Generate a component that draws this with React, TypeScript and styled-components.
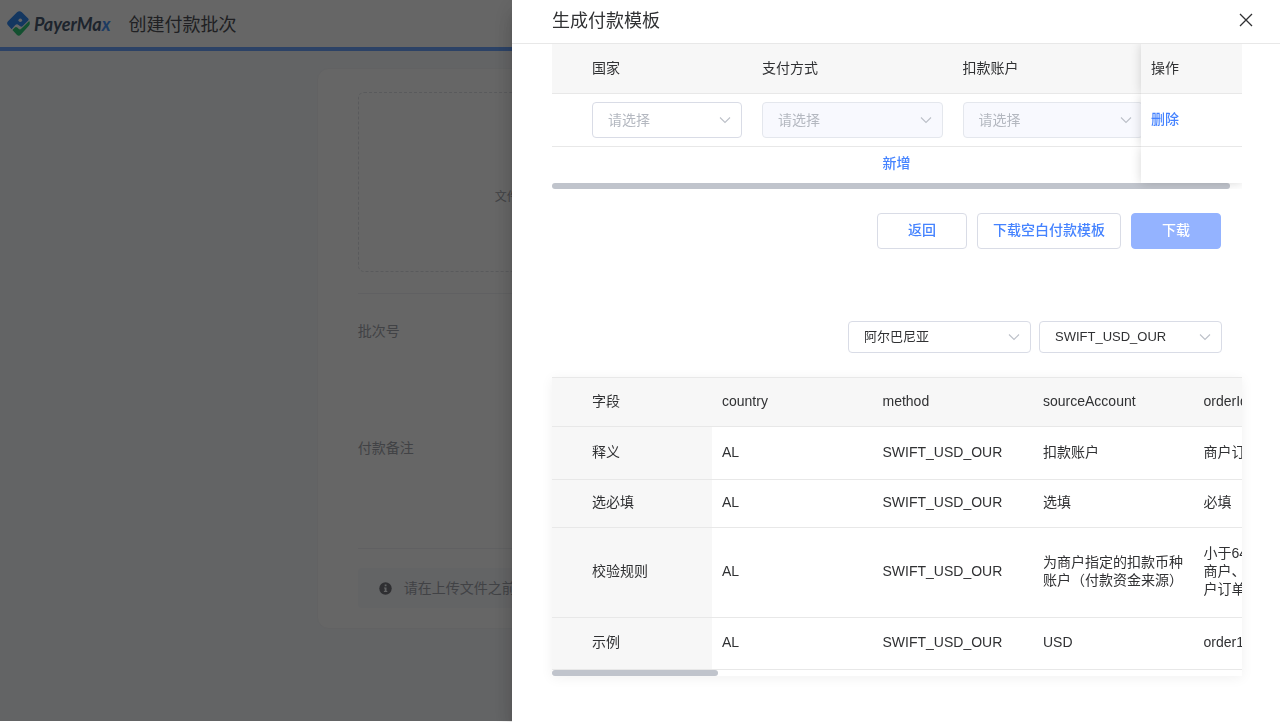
import React from "react";
import styled, { createGlobalStyle } from "styled-components";

const GlobalStyle = createGlobalStyle`
  *, *::before, *::after { box-sizing: border-box; }
  body {
    margin: 0;
    background: #fff;
    color: #303133;
    font-family: "Liberation Sans", "Noto Sans CJK SC", sans-serif;
    font-size: 14px;
    line-height: 18px;
  }
  button, select { font-family: inherit; }
`;

/* ---------- page behind the drawer ---------- */

const Page = styled.div`
  min-height: calc(100vh - 1px);
  background: #f8f9fd;
`;

const TopBar = styled.header`
  display: flex;
  align-items: center;
  gap: 18px;
  height: 51px;
  padding: 0 7px;
  background: #fff;
  border-bottom: 4px solid #6ea6ff;
`;

const Brand = styled.a`
  display: flex;
  align-items: center;
  gap: 4px;
  color: #4a5a70;
  font: italic 700 18px/24px "Lato", sans-serif;
  text-decoration: none;

  em { color: #4a95f5; }
`;

const PageTitle = styled.h1`
  margin: 0;
  padding-top: 2px;
  color: #505258;
  font-size: 18px;
  font-weight: 400;
  line-height: 24px;
`;

const Card = styled.main`
  width: 50.5%;
  margin: 17px auto 0;
  padding: 23px 40px 20px;
  background: #fff;
  border: 1px solid #f5f6f8;
  border-radius: 12px;
`;

const DropZone = styled.div`
  display: flex;
  align-items: center;
  height: 180px;
  padding: 30px 136px 0;
  border: 1px dashed #dfe1e6;
  border-radius: 6px;
  color: #a3a6ad;
  font-size: 12px;
`;

const Fields = styled.section`
  display: flex;
  flex-direction: column;
  gap: 99px;
  height: 256px;
  margin: 21px 0 19px;
  padding: 28px 0;
  border-top: 1px solid #f0f1f5;
  border-bottom: 1px solid #f0f1f5;
  color: #a3a6ad;
`;

const Notice = styled.p`
  display: flex;
  align-items: center;
  gap: 12px;
  height: 40px;
  margin: 0;
  padding: 0 21px;
  background: #f8f9fd;
  border-radius: 4px;
  color: #a3a6ad;
  white-space: nowrap;
`;

/* ---------- drawer ---------- */

const Mask = styled.div`
  position: fixed;
  inset: 0 0 1px;
  background: rgba(0, 0, 0, 0.6);
`;

const Drawer = styled.aside`
  position: fixed;
  inset: 0 0 0 auto;
  display: flex;
  flex-direction: column;
  width: 60%;
  background: #fff;
  box-shadow: 0 8px 10px -5px rgba(0, 0, 0, 0.2), 0 16px 20px rgba(0, 0, 0, 0.12),
    0 6px 24px 2px rgba(0, 0, 0, 0.1);
`;

const DrawerHeader = styled.div`
  display: flex;
  align-items: center;
  justify-content: space-between;
  height: 44px;
  padding: 0 25px 3px 40px;
  border-bottom: 1px solid #e8e8e8;

  h2 {
    margin: 0;
    padding-top: 2px;
    font-size: 18px;
    font-weight: 400;
    line-height: 24px;
  }
`;

const CloseButton = styled.button`
  display: flex;
  padding: 2px;
  border: 0;
  background: none;
  color: #303133;
  cursor: pointer;
`;

const DrawerBody = styled.div`
  flex: 1;
  min-height: 0;
  padding: 0 38px 0 40px;
  overflow: hidden;
`;

const Scroller = styled.div<{ $raised?: boolean }>`
  overflow-x: auto;
  overflow-y: hidden;
  scrollbar-width: none;
  box-shadow: ${(p) => (p.$raised ? "0 2px 12px rgba(0, 0, 0, 0.06)" : "none")};
`;

const ScrollThumb = styled.div<{ $share: number }>`
  position: sticky;
  left: 0;
  width: ${(p) => p.$share}%;
  height: 6px;
  border-radius: 3px;
  background: #c0c4cc;
`;

const BaseTable = styled.table`
  table-layout: fixed;
  border-collapse: separate;
  border-spacing: 0;

  th, td {
    padding: 0 10px;
    border-bottom: 1px solid #e8e8e8;
    font-weight: 400;
    text-align: left;
  }
  th:first-child { padding-left: 40px; }
  thead th {
    height: 50px;
    padding-bottom: 2px;
    background: #f7f7f7;
  }
`;

const TemplateTable = styled(BaseTable)`
  width: calc(100% + 12px);

  td:first-child { padding-left: 40px; }
  tbody td { height: 53px; }
  tbody td:last-child { padding-bottom: 2px; }
  tfoot td {
    height: 36px;
    padding-bottom: 4px;
    border-bottom: 0;
  }
  tfoot td:first-child { padding-left: 98px; text-align: center; }

  tr > :last-child {
    position: sticky;
    right: 0;
    z-index: 1;
    box-shadow: 0 0 10px rgba(0, 0, 0, 0.16);
    clip-path: inset(0 0 0 -12px);
  }
  tbody td:last-child, tfoot td:last-child { background: #fff; }
  tfoot td:last-child { clip-path: inset(0 0 -8px -12px); }
`;

const FieldTable = styled(BaseTable)`
  width: 802px;

  thead th { border-top: 1px solid #e8e8e8; }
  tbody th, tbody td { padding-bottom: 3px; }
  tbody th { background: #f7f7f7; }
`;

const FieldRow = styled.tr<{ $height: number }>`
  height: ${(p) => p.$height}px;
`;

const TextButton = styled.button`
  padding: 0;
  border: 0;
  background: none;
  color: #4583ff;
  font-size: 14px;
  font-weight: 500;
  line-height: 18px;
  cursor: pointer;
`;

const SelectBox = styled.div`
  position: relative;

  svg {
    position: absolute;
    top: 50%;
    right: 11px;
    transform: translateY(-50%);
    pointer-events: none;
  }
`;

const SelectInput = styled.select<{ $compact?: boolean }>`
  display: block;
  width: 100%;
  height: ${(p) => (p.$compact ? 32 : 36)}px;
  padding: 0 30px 1px 15px;
  appearance: none;
  background: #fff;
  border: 1px solid #d9dce6;
  border-radius: 4px;
  color: ${(p) => (p.$compact ? "#303133" : "#b4b8c0")};
  font-size: ${(p) => (p.$compact ? 13 : 14)}px;
  opacity: 1;

  &:disabled {
    background: #f8f9fe;
    border-color: #e4e7ed;
  }
`;

const ButtonRow = styled.div`
  display: flex;
  justify-content: flex-end;
  gap: 10px;
  margin: 24px 21px 0 0;
`;

const Button = styled.button<{ $primary?: boolean }>`
  min-width: 90px;
  height: 36px;
  padding: 0 15px 2px;
  border: 1px solid ${(p) => (p.$primary ? "#94b3ff" : "#d9dce6")};
  border-radius: 4px;
  background: ${(p) => (p.$primary ? "#94b3ff" : "#fff")};
  color: ${(p) => (p.$primary ? "#fff" : "#4583ff")};
  font-size: 14px;
  font-weight: 500;
  line-height: 18px;
`;

const FilterRow = styled.div`
  display: grid;
  grid-template-columns: 183px 183px;
  justify-content: end;
  gap: 8px;
  margin: 72px 20px 24px 0;
`;

/* ---------- drawings ---------- */

const LogoMark = () => (
  <svg width="23" height="26" viewBox="0 0 23 26" aria-hidden="true">
    <path
      d="M10 1.200 1 10.300c-1.200 1.300-1.200 2.700 0 4l3.600 3.900 3.700-4.100c1-1 2.100-1.100 3.200-.2l1.700 1.400c.9.700 1.700.6 2.500-.2l5.500-5.600c.6-.7.600-1.400 0-2l-6.300-6.300c-1.500-1.400-3.400-1.400-4.900 0Z"
      fill="#3389f0"
    />
    <circle cx="13.300" cy="9.200" r="1.800" fill="#fff" />
    <path
      d="m5.400 18.900 2.200-2.200c.9-.9 1.800-.9 2.700-.1l1.500 1.300c.8.700 1.600.6 2.400-.1l8-7.700c1 1.700.8 3.400-.6 4.900l-7.900 8.700c-1.200 1.300-2.700 1.300-3.900 0Z"
      fill="#30c878"
    />
  </svg>
);

const InfoIcon = () => (
  <svg width="13" height="13" viewBox="0 0 13 13" aria-hidden="true">
    <circle cx="6.500" cy="6.500" r="6.200" fill="#75777d" />
    <path d="M5.700 2.600h1.800v1.700H5.700zM5 5.400h2.500v3.700h.8v1H4.900v-1h.8V6.400H5z" fill="#f8f9fd" />
  </svg>
);

const CloseIcon = () => (
  <svg width="14" height="14" viewBox="0 0 14 14" aria-hidden="true">
    <path d="m1 1 12 12M13 1 1 13" stroke="currentColor" strokeWidth="1.300" fill="none" />
  </svg>
);

const Chevron = () => (
  <svg width="12" height="12" viewBox="0 0 12 12" aria-hidden="true">
    <path d="m1 3.500 5 5 5-5" stroke="#bcc0c8" strokeWidth="1.100" fill="none" />
  </svg>
);

type PickerProps = { label: string; value: string; disabled?: boolean; compact?: boolean };

const Picker = ({ label, value, disabled, compact }: PickerProps) => (
  <SelectBox>
    <SelectInput aria-label={label} disabled={disabled} $compact={compact}>
      <option>{value}</option>
    </SelectInput>
    <Chevron />
  </SelectBox>
);

const fieldRows: { name: string; height: number; cells: React.ReactNode[] }[] = [
  { name: "释义", height: 53, cells: ["AL", "SWIFT_USD_OUR", "扣款账户", "商户订单号"] },
  { name: "选必填", height: 48, cells: ["AL", "SWIFT_USD_OUR", "选填", "必填"] },
  {
    name: "校验规则",
    height: 90,
    cells: [
      "AL",
      "SWIFT_USD_OUR",
      "为商户指定的扣款币种账户（付款资金来源）",
      <>小于64<br />商户、<br />户订单</>,
    ],
  },
  { name: "示例", height: 52, cells: ["AL", "SWIFT_USD_OUR", "USD", "order1"] },
];

export default function App() {
  return (
    <>
      <GlobalStyle />
      <Page>
        <TopBar>
          <Brand href="#">
            <LogoMark />
            <span>PayerMa<em>x</em></span>
          </Brand>
          <PageTitle>创建付款批次</PageTitle>
        </TopBar>
        <Card>
          <DropZone>文件</DropZone>
          <Fields>
            <div>批次号</div>
            <div>付款备注</div>
          </Fields>
          <Notice>
            <InfoIcon />
            请在上传文件之前
          </Notice>
        </Card>
      </Page>
      <Mask />
      <Drawer role="dialog" aria-labelledby="drawer-title">
        <DrawerHeader>
          <h2 id="drawer-title">生成付款模板</h2>
          <CloseButton aria-label="关闭"><CloseIcon /></CloseButton>
        </DrawerHeader>
        <DrawerBody>
          <Scroller>
            <TemplateTable>
              <colgroup>
                <col style={{ width: 200 }} />
                <col />
                <col />
                <col style={{ width: 101 }} />
              </colgroup>
              <thead>
                <tr>
                  <th>国家</th>
                  <th>支付方式</th>
                  <th>扣款账户</th>
                  <th>操作</th>
                </tr>
              </thead>
              <tbody>
                <tr>
                  <td><Picker label="国家" value="请选择" /></td>
                  <td><Picker label="支付方式" value="请选择" disabled /></td>
                  <td><Picker label="扣款账户" value="请选择" disabled /></td>
                  <td><TextButton>删除</TextButton></td>
                </tr>
              </tbody>
              <tfoot>
                <tr>
                  <td colSpan={3}><TextButton>新增</TextButton></td>
                  <td />
                </tr>
              </tfoot>
            </TemplateTable>
            <ScrollThumb $share={98.3} />
          </Scroller>
          <ButtonRow>
            <Button>返回</Button>
            <Button>下载空白付款模板</Button>
            <Button $primary>下载</Button>
          </ButtonRow>
          <FilterRow>
            <Picker label="国家" value="阿尔巴尼亚" compact />
            <Picker label="支付方式" value="SWIFT_USD_OUR" compact />
          </FilterRow>
          <Scroller $raised>
            <FieldTable>
              <colgroup>
                <col style={{ width: 160 }} />
                <col span={4} />
              </colgroup>
              <thead>
                <tr>
                  <th>字段</th>
                  <th>country</th>
                  <th>method</th>
                  <th>sourceAccount</th>
                  <th>orderId</th>
                </tr>
              </thead>
              <tbody>
                {fieldRows.map((row) => (
                  <FieldRow key={row.name} $height={row.height}>
                    <th scope="row">{row.name}</th>
                    {row.cells.map((cell, i) => (
                      <td key={i}>{cell}</td>
                    ))}
                  </FieldRow>
                ))}
              </tbody>
            </FieldTable>
            <ScrollThumb $share={24} />
          </Scroller>
        </DrawerBody>
      </Drawer>
    </>
  );
}
